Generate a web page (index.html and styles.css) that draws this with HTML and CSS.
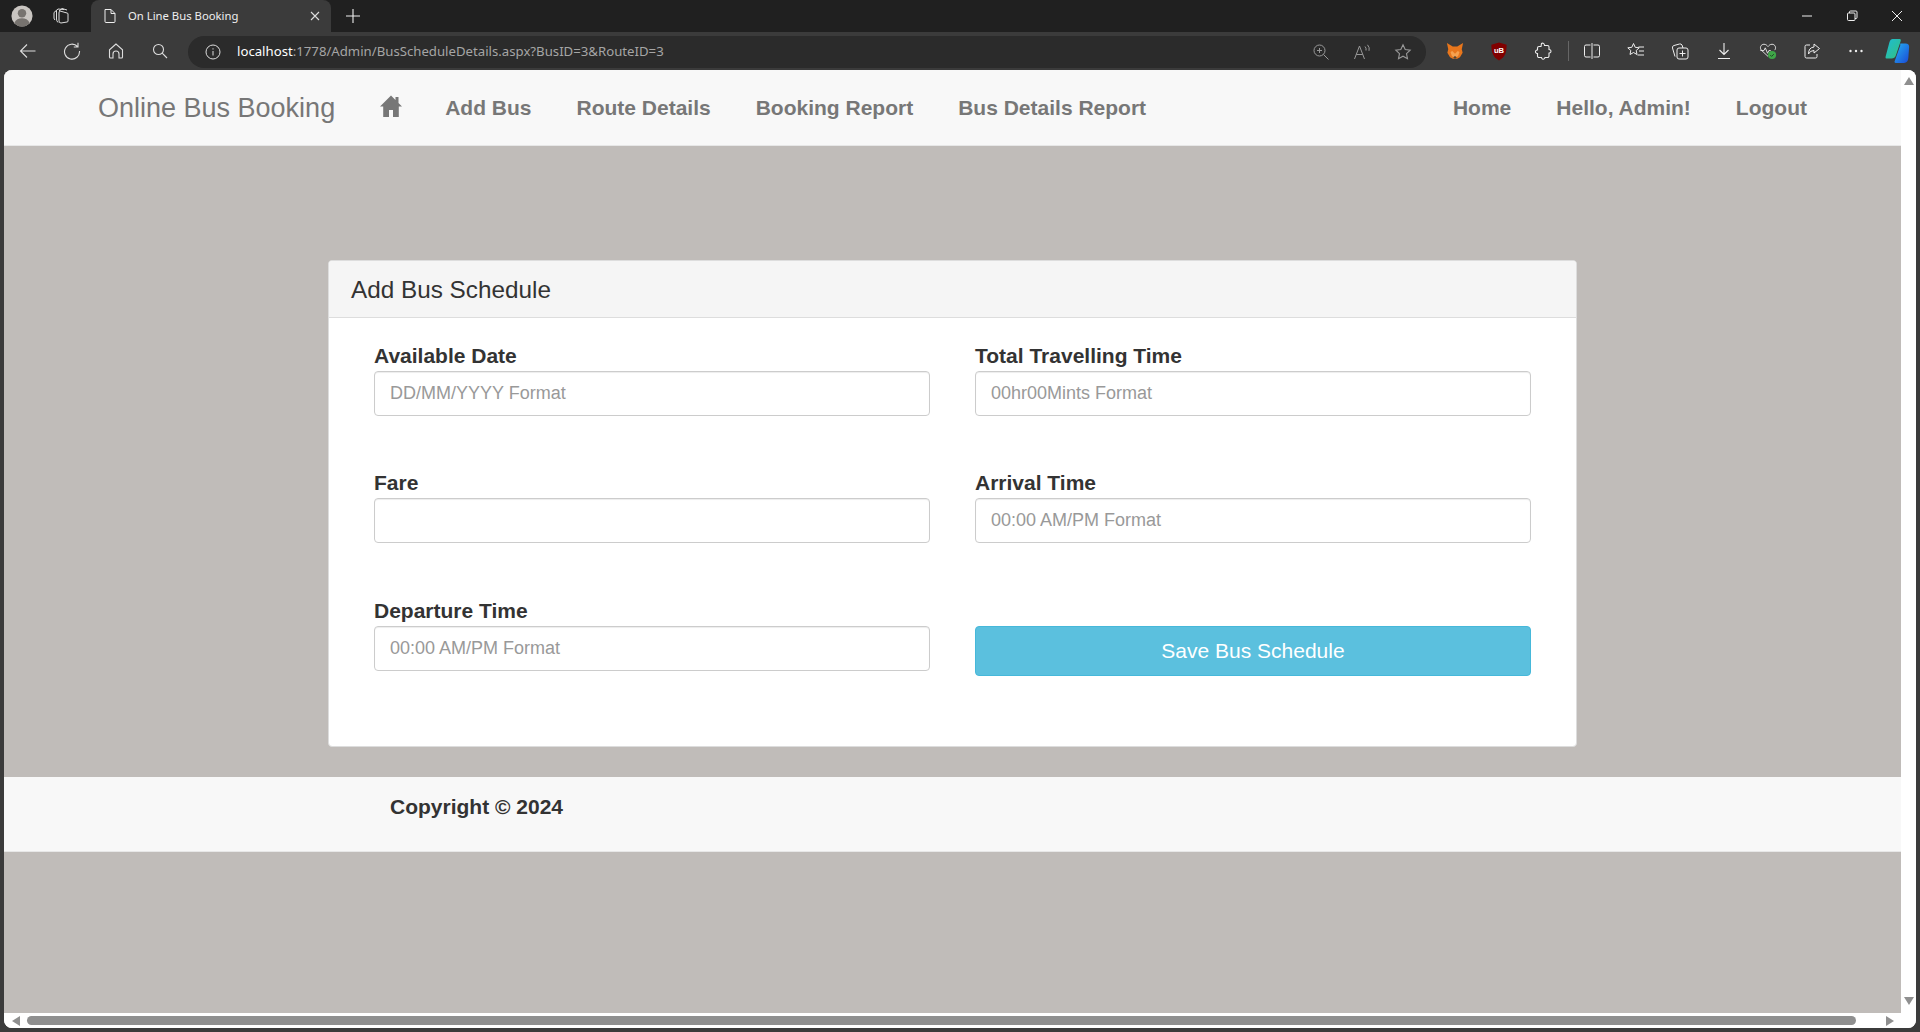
FILE: index.html
```html
<!DOCTYPE html>
<html lang="en">
<head>
<meta charset="utf-8">
<title>On Line Bus Booking</title>
<link rel="stylesheet" href="styles.css">
</head>
<body>
<div class="browser">
  <div class="tabbar">
    <div class="tabbar-left">
      <svg class="ic avatar" viewBox="0 0 24 24"><circle cx="12" cy="12" r="11.5" fill="#c9c5c1"/><circle cx="12" cy="9" r="4.6" fill="#77736f"/><path d="M3.6 19.5c1.6-3.6 4.8-5 8.4-5s6.8 1.4 8.4 5A11.5 11.5 0 0 1 12 23.500a11.500 11.500 0 0 1-8.400-4z" fill="#77736f"/></svg>
      <svg class="ic workspaces" viewBox="0 0 18 18" fill="none" stroke="#ddd" stroke-width="1"><path d="M2 5.500 L2 11 Q2 12 3 13 M4.500 3.500 L4.500 12 Q4.500 14 6 15.500 M7 6 L7 14 Q7 16 9 16 L15 15 Q16 15 16 14 L16 7 Q16 6 15 6 L8 4 Q7 4 7 6z M2 5.500 L6 2 L12 2.500 M7 4 L10 1.500 L15 3"/></svg>
    </div>
    <div class="tab">
      <svg class="ic doc" viewBox="0 0 14 16" fill="none" stroke="#eee" stroke-width="1"><path d="M2 1.500h6l4 4v8a1 1 0 0 1-1 1H3a1 1 0 0 1-1-1z M8 1.500v4h4"/></svg>
      <span class="tab-title">On Line Bus Booking</span>
      <svg class="ic tab-close" viewBox="0 0 10 10" stroke="#ddd" stroke-width="1.100"><path d="M1 1l8 8M9 1l-8 8"/></svg>
    </div>
    <svg class="ic newtab" viewBox="0 0 14 14" stroke="#eee" stroke-width="1.100"><path d="M7 0v14M0 7h14"/></svg>
    <div class="win-controls">
      <svg class="ic win" viewBox="0 0 12 12" stroke="#eee" stroke-width="1"><path d="M1 6h10"/></svg>
      <svg class="ic win" viewBox="0 0 12 12" fill="none" stroke="#eee" stroke-width="1"><rect x="1.500" y="3" width="7.500" height="7.500" rx="1"/><path d="M3.500 3V2a1 1 0 0 1 1-1H10a1 1 0 0 1 1 1v5.500a1 1 0 0 1-1 1H9"/></svg>
      <svg class="ic win" viewBox="0 0 12 12" stroke="#eee" stroke-width="1"><path d="M1 1l10 10M11 1L1 11"/></svg>
    </div>
  </div>

  <div class="toolbar">
    <div class="nav-icons">
      <svg class="ic tool" viewBox="0 0 18 18" fill="none" stroke="#ddd" stroke-width="1.100"><path d="M16.500 9H1.500M8 2.500L1.500 9 8 15.500"/></svg>
      <svg class="ic tool" viewBox="0 0 18 18" fill="none" stroke="#ddd" stroke-width="1.100"><path d="M14.500 4.500A7.500 7.500 0 1 0 16.500 9M15 .800v4.200h-4.200"/></svg>
      <svg class="ic tool" viewBox="0 0 18 18" fill="none" stroke="#ddd" stroke-width="1.100"><path d="M9 2L2.500 7.800V15a1 1 0 0 0 1 1h2.500v-4a3 3 0 0 1 6 0v4h2.500a1 1 0 0 0 1-1V7.800z"/></svg>
      <svg class="ic tool" viewBox="0 0 18 18" fill="none" stroke="#ddd" stroke-width="1.100"><circle cx="7.500" cy="7.500" r="5"/><path d="M11.200 11.200L16 16"/></svg>
    </div>
    <div class="address">
      <svg class="ic info" viewBox="0 0 16 16" fill="none" stroke="#ddd" stroke-width="1"><circle cx="8" cy="8" r="7"/><path d="M8 7v4.500M8 4.300v1.200"/></svg>
      <span class="url"><span class="url-host">localhost</span>:1778/Admin/BusScheduleDetails.aspx?BusID=3&amp;RouteID=3</span>
      <div class="address-right">
        <svg class="ic tool-dim" viewBox="0 0 18 18" fill="none" stroke="#999" stroke-width="1"><circle cx="7.500" cy="7.500" r="5.500"/><path d="M11.500 11.500L16.500 16.500M5 7.500h5M7.500 5v5"/></svg>
        <svg class="ic tool-dim" viewBox="0 0 18 18" fill="none" stroke="#999" stroke-width="1"><path d="M1.500 16L6.500 3l5 13M3.300 11.500h6.400M12 3.500q1.500 1.500 1 4M14.500 1.800q2.500 2.800 1.500 6"/></svg>
        <svg class="ic tool-dim" viewBox="0 0 18 18" fill="none" stroke="#999" stroke-width="1.100"><path d="M9 1.800l2.200 4.700 5 .6-3.700 3.500 1 5.100L9 13.200l-4.500 2.500 1-5.100L1.800 7.100l5-.6z"/></svg>
      </div>
    </div>
    <div class="extensions">
      <svg class="ic ext fox" viewBox="0 0 20 20"><path d="M1 1l6.500 4h5L19 1l-1.500 7 1 4-3 5-3 1.500h-5L4.500 17l-3-5 1-4z" fill="#e8761c"/><path d="M7 10l3 3 3-3 2 1-1.500 4.500L10 18l-3.500-2.500L5 11z" fill="#f6a14f"/><path d="M8 17l2-1.500 2 1.500-2 2z" fill="#5a4632"/></svg>
      <svg class="ic ext shield" viewBox="0 0 18 20"><path d="M9 .500l8 2.500c0 8-1.500 13-8 16.500C2.500 16 1 11 1 3z" fill="#800000"/><text class="ub-text" x="9" y="12">uB</text></svg>
      <svg class="ic ext" viewBox="0 0 18 18" fill="none" stroke="#eee" stroke-width="1.100"><path d="M7.500 1.500c1-.8 2.500-.3 2.800 1l.2 1h3a1.500 1.500 0 0 1 1.500 1.500v2.500l1 .3c1.300.4 1.300 2.600 0 3l-1 .3V14a1.500 1.500 0 0 1-1.500 1.500h-2.500l-.4.900c-.5 1.100-2.200 1.100-2.700 0l-.4-.9H5A1.500 1.500 0 0 1 3.500 14v-2.500l-1-.3c-1.400-.5-1.400-2.500 0-3l1-.3V6A1.500 1.500 0 0 1 5 4.500h2z"/></svg>
      <span class="ext-divider"></span>
      <svg class="ic ext" viewBox="0 0 18 18" fill="none" stroke="#eee" stroke-width="1"><path d="M7.500 3H3a1.500 1.500 0 0 0-1.500 1.500v9A1.500 1.500 0 0 0 3 15h4.500M10.500 3H15a1.500 1.500 0 0 1 1.500 1.500v9A1.500 1.500 0 0 1 15 15h-4.500M9 1v16"/></svg>
      <svg class="ic ext" viewBox="0 0 18 18" fill="none" stroke="#eee" stroke-width="1"><path d="M6.500 1.500l1.700 3.800 4 .5-3 2.700.8 4-3.500-2-3.500 2 .8-4-3-2.700 4-.5zM11.500 5h5.500M12 9h5M10.500 13h6.500"/></svg>
      <svg class="ic ext" viewBox="0 0 18 18" fill="none" stroke="#eee" stroke-width="1"><path d="M4 14.500L1.500 6Q1 4 3 3.500L8.500 2q1.800-.4 2.500 1L12 6"/><rect x="6" y="6" width="11" height="11" rx="2"/><path d="M11.500 8.500v6M8.500 11.500h6"/></svg>
      <svg class="ic ext" viewBox="0 0 18 18" fill="none" stroke="#eee" stroke-width="1.100"><path d="M9 1v11.500M4.500 8L9 12.500 13.500 8M3 16.500h12"/></svg>
      <svg class="ic ext" viewBox="0 0 20 20" fill="none" stroke="#eee" stroke-width="1"><path d="M10 16L2.500 9C.5 6.500 2 2.500 5.500 2.500 7.800 2.500 9 4 10 5c1-1 2.200-2.500 4.500-2.500 3.500 0 5 4 3 6.500"/><path d="M1.500 9.500h4l1.500-3 2.500 6 1.500-3h2"/><circle cx="14.500" cy="14.500" r="4.500" fill="#3fa648" stroke="none"/><path d="M12.500 14.500l1.500 1.500 2.500-2.500" stroke="#1c3d20"/></svg>
      <svg class="ic ext" viewBox="0 0 18 18" fill="none" stroke="#eee" stroke-width="1"><path d="M7 3H3.500A1.500 1.500 0 0 0 2 4.500v10A1.500 1.500 0 0 0 3.500 16h9a1.500 1.500 0 0 0 1.500-1.500V12M11 2l5.500 4.500L11 11V8.500Q7 8.500 5.500 12q0-6.500 5.500-7z"/></svg>
      <svg class="ic ext" viewBox="0 0 18 18" fill="#eee"><circle cx="3.500" cy="9" r="1.200"/><circle cx="9" cy="9" r="1.200"/><circle cx="14.500" cy="9" r="1.200"/></svg>
      <svg class="ic copilot" viewBox="0 0 24 24"><defs><linearGradient id="cpa" x1="0" y1="0" x2="1" y2="1"><stop offset="0" stop-color="#1dbbd6"/><stop offset="1" stop-color="#34c27c"/></linearGradient><linearGradient id="cpb" x1="0" y1="0" x2="1" y2="1"><stop offset="0" stop-color="#25b3f0"/><stop offset="1" stop-color="#1a49d8"/></linearGradient></defs><path d="M8 1h6.500q1.500 0 1 1.500L11 16q-1 3-4 3H3q-2 0-1.500-2L5 4q1-3 3-3z" fill="url(#cpa)"/><path d="M15 5h5q3 0 3.200 3l-.7 10q-.3 5-4 5H11q-2 0-1-2l5-14q0-2 0-2z" fill="url(#cpb)"/></svg>
    </div>
  </div>

  <div class="viewport">
    <div class="page-row">
      <div class="page">
        <nav class="navbar">
          <a class="brand">Online Bus Booking</a>
          <svg class="home-icon" viewBox="0 0 24 24"><path fill="#777" d="M12 1.500L1 12.500h3.200V23h5.800v-7h4v7h5.800V12.500H23L19.500 9V3h-3v3z"/></svg>
          <div class="nav-links">
            <a class="nav-link">Add Bus</a>
            <a class="nav-link">Route Details</a>
            <a class="nav-link">Booking Report</a>
            <a class="nav-link">Bus Details Report</a>
          </div>
          <div class="nav-links nav-right">
            <a class="nav-link">Home</a>
            <a class="nav-link">Hello, Admin!</a>
            <a class="nav-link">Logout</a>
          </div>
        </nav>
        <main class="main">
          <section class="card">
            <h3 class="card-title">Add Bus Schedule</h3>
            <form class="form-grid">
              <div class="field">
                <label class="field-label">Available Date</label>
                <input class="field-input" type="text" placeholder="DD/MM/YYYY Format">
              </div>
              <div class="field">
                <label class="field-label">Total Travelling Time</label>
                <input class="field-input" type="text" placeholder="00hr00Mints Format">
              </div>
              <div class="field">
                <label class="field-label">Fare</label>
                <input class="field-input" type="text">
              </div>
              <div class="field">
                <label class="field-label">Arrival Time</label>
                <input class="field-input" type="text" placeholder="00:00 AM/PM Format">
              </div>
              <div class="field field-low">
                <label class="field-label">Departure Time</label>
                <input class="field-input" type="text" placeholder="00:00 AM/PM Format">
              </div>
              <div class="field field-low">
                <button class="save-btn" type="button">Save Bus Schedule</button>
              </div>
            </form>
          </section>
        </main>
        <footer class="footer"><span class="copyright">Copyright © 2024</span></footer>
        <div class="page-rest"></div>
      </div>
      <div class="vscroll">
        <span class="arrow arrow-up"></span>
        <span class="arrow arrow-down"></span>
      </div>
    </div>
    <div class="hscroll">
      <span class="arrow arrow-left"></span>
      <span class="hthumb"></span>
      <span class="arrow arrow-right"></span>
    </div>
  </div>
</div>
</body>
</html>
```

FILE: styles.css
```css
* { box-sizing: border-box; }
html, body { margin: 0; height: 100%; overflow: hidden; }
body { font-family: "Liberation Sans", Arial, sans-serif; background: #3b3b3b; color: #333; }
.browser { display: flex; flex-direction: column; height: 1032px; }
.ic { display: block; flex: none; }

/* Tab strip */
.tabbar { height: 32px; background: #202020; display: flex; align-items: center; flex: none; }
.tabbar-left { display: flex; align-items: center; width: 91px; padding-left: 11px; gap: 19px; height: 32px; }
.avatar { width: 22px; height: 22px; }
.workspaces { width: 18px; height: 18px; }
.tab { width: 240px; height: 32px; margin-top: 0; background: #3b3b3b; border-radius: 8px 8px 0 0; display: flex; align-items: center; padding-left: 12px; }
.doc { width: 14px; height: 16px; }
.tab-title { font: 11.300px "Noto Sans", sans-serif; color: #eee; margin: 0 0 1px 11px; width: 182px; white-space: nowrap; }
.tab-close { width: 10px; height: 10px; }
.newtab { width: 14px; height: 14px; margin-left: 15px; }
.win-controls { margin-left: auto; display: flex; align-items: center; gap: 33px; padding-right: 17px; }
.win { width: 12px; height: 12px; }

/* Toolbar */
.toolbar { height: 38px; background: #3b3b3b; display: flex; align-items: center; flex: none; }
.nav-icons { display: flex; align-items: center; gap: 26px; padding-left: 19px; width: 188px; }
.tool { width: 18px; height: 18px; }
.address { width: 1238px; height: 32px; margin-top: 1px; background: #2b2b2b; border-radius: 16px; display: flex; align-items: center; padding-left: 17px; }
.info { width: 16px; height: 16px; }
.url { font: 13.200px "Noto Sans", sans-serif; color: #a5a5a5; margin: 0 0 2px 16px; white-space: nowrap; }
.url-host { color: #fff; }
.address-right { margin-left: auto; display: flex; gap: 23px; padding-right: 14px; }
.tool-dim { width: 18px; height: 18px; }
.extensions { display: flex; align-items: center; gap: 26px; padding-left: 20px; flex: 1; }
.ext { width: 18px; height: 18px; }
.fox { width: 18px; height: 20px; }
.shield { width: 18px; height: 19px; }
.ub-text { font: 700 8px "Liberation Sans", sans-serif; fill: #fff; text-anchor: middle; }
.ext-divider { width: 1px; height: 20px; background: #666; margin: 0 -12px 0 -10px; }
.copilot { width: 26px; height: 26px; margin-left: -7px; }

/* Viewport */
.viewport { flex: 1; margin: 0 4px 4px; background: #fff; border-radius: 8px; overflow: hidden; display: flex; flex-direction: column; }
.page-row { flex: 1; display: flex; min-height: 0; }
.page { flex: 1; display: flex; flex-direction: column; background: #c0bcb9; min-width: 0; }

/* Site navbar */
.navbar { height: 76px; background: #f8f8f8; border-bottom: 1px solid #e7e7e7; display: flex; align-items: center; padding: 1px 94px 0; flex: none; }
.brand { font-size: 27px; color: #777; }
.home-icon { width: 24px; height: 24px; margin: -5px 0 0 44px; display: block; }
.nav-links { display: flex; gap: 45px; margin-left: 42px; }
.nav-link { font-size: 21px; font-weight: 700; color: #777; white-space: nowrap; }
.nav-right { margin-left: auto; }

/* Card */
.main { padding: 114px 0 30px; flex: none; }
.card { width: 1249px; margin: 0 auto; background: #fff; border: 1px solid #ddd; border-radius: 4px; overflow: hidden; }
.card-title { margin: 0; height: 57px; line-height: 58px; padding-left: 22px; background: #f5f5f5; border-bottom: 1px solid #ddd; font-size: 24.300px; font-weight: 400; color: #333; }
.form-grid { display: grid; grid-template-columns: 556px 556px; column-gap: 45px; row-gap: 56px; padding: 27px 0 70px 45px; }
.field { display: flex; flex-direction: column; }
.field-low { margin-top: 1px; }
.field-label { font-size: 21px; font-weight: 700; line-height: 22px; margin-bottom: 4px; color: #333; }
.field-input { height: 45px; width: 100%; border: 1px solid #ccc; border-radius: 4px; padding: 0 15px; font: 18px "Liberation Sans", sans-serif; color: #555; box-shadow: inset 0 1px 1px rgba(0,0,0,.075); background: #fff; }
.field-input::placeholder { color: #999; opacity: 1; }
.save-btn { height: 50px; margin-top: 26px; width: 100%; background: #5bc0de; border: 1px solid #46b8da; border-radius: 4px; color: #fff; font: 21px "Liberation Sans", sans-serif; }

/* Footer */
.footer { height: 75px; background: #f8f8f8; border-bottom: 1px solid #e7e7e7; padding: 18px 0 0 386px; flex: none; }
.copyright { font-size: 21px; font-weight: 700; color: #333; line-height: 23px; display: block; }
.page-rest { flex: 1; }

/* Scrollbars */
.vscroll { width: 15px; background: #fff; display: flex; flex-direction: column; justify-content: space-between; align-items: center; padding: 7px 0 8px; flex: none; }
.hscroll { height: 15px; background: #fff; display: flex; align-items: center; padding: 0 22px 0 8px; flex: none; }
.arrow { width: 0; height: 0; display: block; flex: none; }
.arrow-up { border: 5px solid transparent; border-top: 0; border-bottom: 8px solid #8f8f8f; }
.arrow-down { border: 5px solid transparent; border-bottom: 0; border-top: 8px solid #8f8f8f; }
.arrow-left { border: 5px solid transparent; border-left: 0; border-right: 8px solid #8f8f8f; }
.arrow-right { border: 5px solid transparent; border-right: 0; border-left: 8px solid #8f8f8f; margin-left: 30px; }
.hthumb { height: 9px; background: #8f8f8f; border-radius: 5px; margin-left: 7px; flex: 1; }
```
